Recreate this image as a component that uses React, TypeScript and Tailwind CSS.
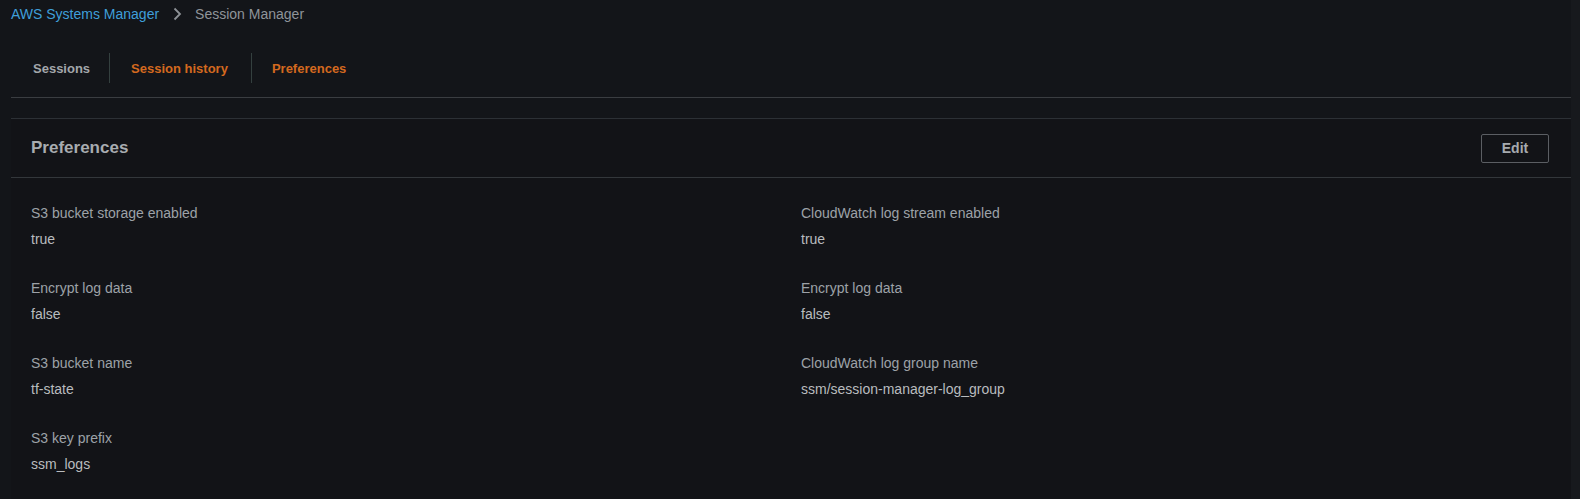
import React from 'react';

const rows: [string, string, string?, string?][] = [
  ['S3 bucket storage enabled', 'true', 'CloudWatch log stream enabled', 'true'],
  ['Encrypt log data', 'false', 'Encrypt log data', 'false'],
  ['S3 bucket name', 'tf-state', 'CloudWatch log group name', 'ssm/session-manager-log_group'],
  ['S3 key prefix', 'ssm_logs'],
];

const Field: React.FC<{ label?: string; value?: string }> = ({ label, value }) => {
  if (!label) return <div />;
  return (
    <div className="flex flex-col gap-[6px]">
      <div className="text-[14px] leading-5 text-[#9da2a8]">{label}</div>
      <div className="text-[14px] leading-5 text-[#b9bcbf]">{value}</div>
    </div>
  );
};

const App: React.FC = () => {
  return (
    <div
      className="min-h-screen w-full bg-[#131519] flex"
      style={{ fontFamily: '"Liberation Sans", Arial, sans-serif' }}
    >
      <main className="flex-1 pl-[11px]">
        {/* breadcrumb */}
        <nav className="h-[28px] flex items-center gap-[10px] text-[14px]">
          <span className="text-[#3f9fd9]">AWS Systems Manager</span>
          <svg className="w-4 h-4 text-[#8d9196]" viewBox="0 0 16 16" fill="none" stroke="currentColor" strokeWidth="1.8">
            <polyline points="5.5 2.5 11 8 5.5 13.5" />
          </svg>
          <span className="text-[#8f9499]">Session Manager</span>
        </nav>

        {/* tabs */}
        <div className="mt-[25px] pb-[14px] border-b border-[#3a3d41]">
          <div className="flex items-center h-[30px] text-[13px] font-bold">
            <span className="pl-[22px] pr-[19px] pt-[2px] text-[#a3a7ab]">Sessions</span>
            <span className="w-px h-[30px] bg-[#34403f]" />
            <span className="pl-[21px] pr-[23px] pt-[2px] text-[#d4691f]">Session history</span>
            <span className="w-px h-[30px] bg-[#34403f]" />
            <span className="pl-[20px] pr-[20px] pt-[2px] text-[#d4691f]">Preferences</span>
          </div>
        </div>

        {/* card */}
        <section className="mt-[20px] border-t border-[#2c3035] bg-[#121317] min-h-[400px]">
          <header className="h-[59px] flex items-center justify-between pl-[20px] pr-[22px] border-b border-[#33373b]">
            <h2 className="text-[17px] font-bold text-[#a8acb0]">Preferences</h2>
            <button className="w-[68px] h-[29px] border border-[#5b5e63] rounded-[2px] text-[14px] font-bold text-[#a6aaae] bg-transparent">
              Edit
            </button>
          </header>

          <div className="px-[20px] pt-[25px] grid grid-cols-2 gap-x-[20px] gap-y-[29px]">
            {rows.map(([l1, v1, l2, v2], i) => (
              <React.Fragment key={i}>
                <Field label={l1} value={v1} />
                <Field label={l2} value={v2} />
              </React.Fragment>
            ))}
          </div>
        </section>
      </main>
      <div className="w-[9px] bg-[#17191d]" />
    </div>
  );
};

export default App;
